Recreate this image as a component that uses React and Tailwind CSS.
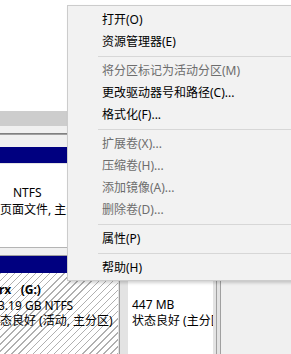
const menuItems = [
  { label: '打开(O)' },
  { label: '资源管理器(E)' },
  { sep: true },
  { label: '将分区标记为活动分区(M)', disabled: true },
  { label: '更改驱动器号和路径(C)...' },
  { label: '格式化(F)...' },
  { sep: true },
  { label: '扩展卷(X)...', disabled: true },
  { label: '压缩卷(H)...', disabled: true },
  { label: '添加镜像(A)...', disabled: true },
  { label: '删除卷(D)...', disabled: true },
  { sep: true },
  { label: '属性(P)' },
  { sep: true },
  { label: '帮助(H)' },
];

const ContextMenu = () => (
  <div className="absolute left-[67px] top-[5px] w-[240px] border border-[#cccccc] bg-[#f2f2f2] pb-px pt-[3px] shadow-[2px_2px_3px_rgba(0,0,0,0.18)]">
    {menuItems.map((item, i) =>
      item.sep ? (
        <div key={i} className="flex h-[7px] items-center pl-[30px]">
          <div className="h-px w-full bg-[#d7d7d7]" />
        </div>
      ) : (
        <div
          key={i}
          className={`h-[22px] whitespace-nowrap pl-[34px] leading-[22px] ${
            item.disabled ? 'text-[#6d6d6d]' : 'text-black'
          }`}
        >
          {item.label}
        </div>
      )
    )}
  </div>
);

export default function App() {
  return (
    <div className="relative h-[354px] w-[291px] overflow-hidden bg-white font-['Noto_Sans','Noto_Sans_CJK_SC',sans-serif] text-[12px] text-black">
      <div className="h-[111px] bg-white" />
      <div className="h-[15px] bg-[#cdcdcd]" />
      <div className="h-[7px] bg-[#f0f0f0]" />
      <div className="h-px bg-[#808080]" />
      <div className="h-px bg-[#a0a0a0]" />
      <div className="h-[12px] bg-[#f0f0f0]" />
      <div className="h-[16px] bg-[#000080]" />

      <div className="h-[84px] border-t border-[#e3e3e3] bg-white pt-[20px] leading-[17px]">
        <p className="whitespace-nowrap pl-[13px]">NTFS</p>
        <p className="whitespace-nowrap">页面文件, 主分区)</p>
      </div>
      <div className="h-px bg-[#b4b4b4]" />
      <div className="h-[7px] bg-[#f0f0f0]" />
      <div className="h-px bg-[#a0a0a0]" />
      <div className="h-[17px] bg-[#000080]" />

      <div className="flex h-[81px]">
        <div className="w-[118px] overflow-hidden whitespace-nowrap bg-[repeating-linear-gradient(135deg,#b0b0b0_0_1px,#ffffff_1px_5px)] pt-[9px] leading-[15.5px]">
          <p className="-ml-px font-bold">rx&nbsp;&nbsp;&nbsp;(G:)</p>
          <p className="-ml-[2px]">3.19 GB NTFS</p>
          <p>态良好 (活动, 主分区)</p>
        </div>
        <div className="flex w-[10px]">
          <div className="w-px bg-[#e3e3e3]" />
          <div className="w-px bg-[#9a9a9a]" />
          <div className="flex-1 bg-[#e3e3e3]" />
        </div>
        <div className="w-[85px] overflow-hidden whitespace-nowrap bg-white pl-[4px] pt-[24px] leading-[16px]">
          <p>447 MB</p>
          <p>状态良好 (主分区)</p>
        </div>
        <div className="flex w-[8px]">
          <div className="w-[3px] bg-[#e3e3e3]" />
          <div className="w-px bg-[#a0a0a0]" />
          <div className="w-[3px] bg-[#e3e3e3]" />
          <div className="w-px bg-[#a0a0a0]" />
        </div>
        <div className="flex-1 bg-[#f0f0f0]" />
      </div>

      <ContextMenu />
    </div>
  );
}
